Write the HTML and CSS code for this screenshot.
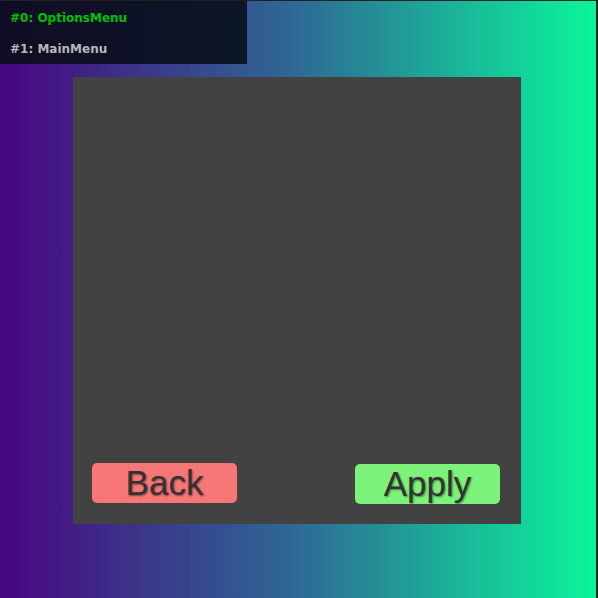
FILE: index.html
```html
<!DOCTYPE html>
<html>
<head>
<meta charset="utf-8">
<link rel="stylesheet" href="styles.css">
</head>
<body>
<div class="screen">
  <div class="stack">
    <div class="stack-item current">#0: OptionsMenu</div>
    <div class="stack-item">#1: MainMenu</div>
  </div>
  <div class="panel">
    <div class="buttons">
      <button class="btn back">Back</button>
      <button class="btn apply">Apply</button>
    </div>
  </div>
</div>
</body>
</html>
```
FILE: styles.css
```css
html, body {
  margin: 0;
  padding: 0;
  width: 598px;
  height: 598px;
  overflow: hidden;
  background: #222;
}
.screen {
  position: relative;
  box-sizing: border-box;
  width: 598px;
  height: 598px;
  border-top: 1px solid #222;
  border-right: 2px solid #222;
  background: linear-gradient(to right, #480680 0%, #2e6a95 50%, #0af59c 100%);
  padding-top: 76px;
  padding-left: 73px;
}
.stack {
  position: absolute;
  left: 0;
  top: 0;
  width: 247px;
  height: 63px;
  background: rgba(8, 14, 24, 0.88);
  font-family: "DejaVu Sans", sans-serif;
  font-weight: bold;
  font-size: 12px;
  display: flex;
  flex-direction: column;
  padding-left: 10px;
  padding-top: 2px;
  box-sizing: border-box;
}
.stack-item {
  height: 31px;
  line-height: 31px;
  color: #b8b8b8;
}
.stack-item.current {
  color: #00c000;
}
.panel {
  width: 448px;
  height: 447px;
  background: #424242;
  display: flex;
  flex-direction: column;
  justify-content: flex-end;
  padding: 0 21px 20px 19px;
  box-sizing: border-box;
}
.buttons {
  display: flex;
  justify-content: space-between;
  align-items: flex-start;
}
.btn {
  width: 145px;
  height: 40px;
  border: none;
  border-radius: 5px;
  padding: 0;
  font-family: "Liberation Sans", Arial, sans-serif;
  font-size: 35px;
  line-height: 40px;
  color: #333;
  text-shadow: 1px 1px 2px rgba(0, 0, 0, 0.45);
}
.back {
  background: #f77777;
}
.apply {
  background: #7cf27a;
  margin-top: 1px;
}
```
